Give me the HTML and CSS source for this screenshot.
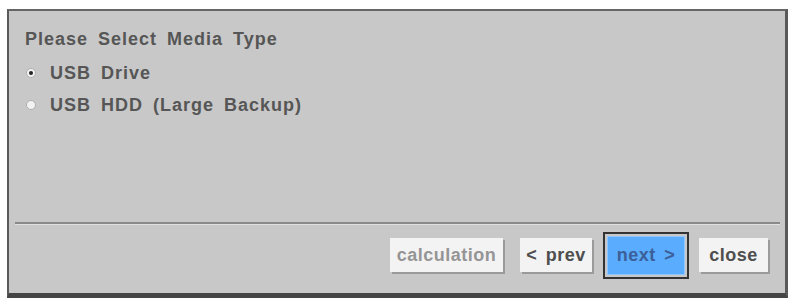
FILE: index.html
```html
<!DOCTYPE html>
<html lang="en">
  <head>
    <meta charset="UTF-8" />
    <meta name="viewport" content="width=device-width, initial-scale=1.0" />
    <title>Backup Media</title>
    <link rel="stylesheet" href="styles.css">
  </head>
  <body>
    <!-- Backup wizard: media type step -->
    <main class="panel">
      <div class="content">
        <div class="title">Please Select Media Type</div>
        <label class="option">
          <span class="radio checked"></span>
          <span>USB Drive</span>
        </label>
        <label class="option">
          <span class="radio"></span>
          <span>USB HDD (Large Backup)</span>
        </label>
      </div>
      <div class="divider"></div>
      <div class="footer">
        <button class="btn calc" disabled>calculation</button>
        <button class="btn prev">&lt; prev</button>
        <button class="btn next">next &gt;</button>
        <button class="btn close">close</button>
      </div>
    </main>
  </body>
</html>
```

FILE: styles.css
```css
body {
  margin: 0;
  background-color: #ffffff;
  font-family: "Liberation Sans", Arial, sans-serif;
}
.panel {
  margin: 9px 0 0 7px;
  width: 776px;
  height: 282px;
  background-color: #c8c8c8;
  border-top: 2px solid #666666;
  border-left: 2px solid #5a5a5a;
  border-right: 3px solid #5a5a5a;
  border-bottom: 5px solid #454545;
  display: flex;
  flex-flow: column nowrap;
}
.content {
  flex: 1;
  padding: 18px 0 0 16px;
  color: #565656;
  font-weight: bold;
  font-size: 18px;
  letter-spacing: 1px;
  word-spacing: 4px;
}
.title {
  line-height: 20px;
  margin-bottom: 8px;
}
.option {
  display: flex;
  align-items: center;
  column-gap: 14px;
  height: 32px;
  padding-left: 1px;
}
.radio {
  width: 8px;
  height: 8px;
  border-radius: 50%;
  background-color: #f2f2f2;
  border: 1px solid #b0b0b0;
  display: grid;
  place-content: center;
}
.radio.checked::after {
  content: "";
  width: 4px;
  height: 4px;
  border-radius: 50%;
  background-color: #222222;
}
.divider {
  margin: 0 5px 0 6px;
  height: 2px;
  background-color: #8a8a8a;
  border-bottom: 1px solid #e0e0e0;
}
.footer {
  height: 68px;
  display: flex;
  justify-content: flex-end;
  align-items: flex-start;
  padding: 13px 17px 0 0;
  box-sizing: border-box;
}
.btn {
  font-family: "Liberation Sans", Arial, sans-serif;
  font-weight: bold;
  font-size: 18px;
  letter-spacing: 0.5px;
  word-spacing: 3px;
  height: 34px;
  padding: 0;
  border: none;
  background-color: #f3f3f3;
  color: #4e4e4e;
  box-shadow: 2px 2px 0 #9a9a9a;
}
.calc {
  width: 113px;
  color: #959595;
}
.prev {
  width: 72px;
  margin-left: 17px;
}
.next {
  width: 78px;
  height: 39px;
  margin-top: -2px;
  margin-left: 15px;
  background-color: #5aacff;
  border: 1px solid #8fc6ff;
  color: #3c5f98;
  box-shadow: none;
  outline: 2px solid #333333;
  outline-offset: 2px;
}
.close {
  width: 69px;
  margin-left: 14px;
}
```
